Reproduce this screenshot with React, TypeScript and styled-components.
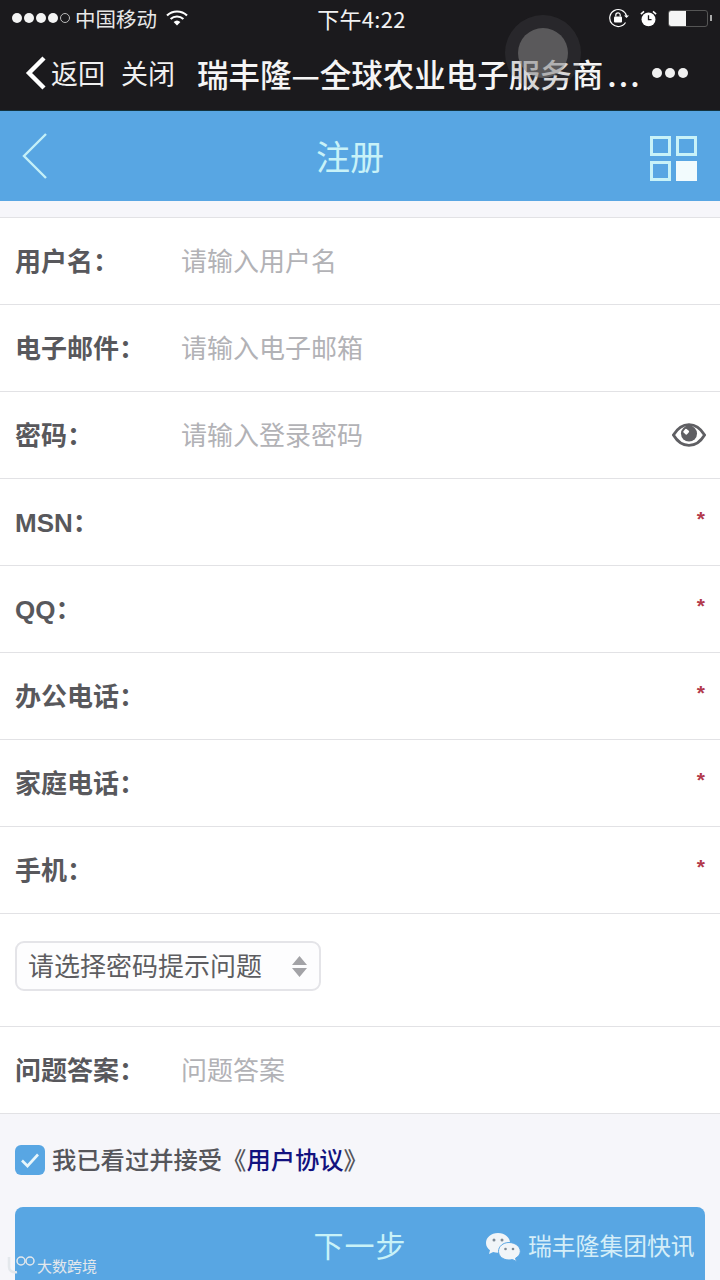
import React from "react";
import styled, { createGlobalStyle } from "styled-components";

const cjk = `"Noto Sans CJK SC", "Liberation Sans", sans-serif`;

const GlobalStyle = createGlobalStyle`
  html, body {
    margin: 0;
    padding: 0;
    background: #f6f6fa;
    font-family: ${cjk};
  }
`;

interface Field {
  label: string;
  placeholder?: string;
  required?: boolean;
  eye?: boolean;
}

const fields: Field[] = [
  { label: "用户名：", placeholder: "请输入用户名" },
  { label: "电子邮件：", placeholder: "请输入电子邮箱" },
  { label: "密码：", placeholder: "请输入登录密码", eye: true },
  { label: "MSN：", required: true },
  { label: "QQ：", required: true },
  { label: "办公电话：", required: true },
  { label: "家庭电话：", required: true },
  { label: "手机：", required: true },
];

function App() {
  return (
    <Page>
      <GlobalStyle />
      <Browser>
        <StatusBar>
          <StatusLeft>
            <Signal>
              <Dot />
              <Dot />
              <Dot />
              <Dot />
              <Dot $empty />
            </Signal>
            <Carrier>中国移动</Carrier>
            <svg width="22" height="16" viewBox="0 0 22 16">
              <path d="M1 5.500a14.500 14.500 0 0 1 20 0" fill="none" stroke="#fff" strokeWidth="2.200" />
              <path d="M4.600 9a9.500 9.500 0 0 1 12.800 0" fill="none" stroke="#fff" strokeWidth="2.200" />
              <path d="M7.600 12a5 5 0 0 1 6.800 0L11 15.600z" fill="#fff" />
            </svg>
          </StatusLeft>
          <Clock>下午4:22</Clock>
          <StatusRight>
            <svg width="21" height="20" viewBox="0 0 21 20">
              <path d="M17.500 14.500A8.500 8.500 0 1 1 18.500 8" fill="none" stroke="#fff" strokeWidth="1.200" />
              <path d="M16 7.500h5L18.500 10z" fill="#fff" />
              <rect x="6" y="8.500" width="8" height="6" rx="1" fill="#fff" />
              <path d="M7.800 8.500V7a2.200 2.200 0 0 1 4.400 0v1.500" fill="none" stroke="#fff" strokeWidth="1.200" />
            </svg>
            <svg width="17" height="19" viewBox="0 0 19 19">
              <circle cx="9.500" cy="10.500" r="7.800" fill="#fff" />
              <path d="M9.500 6v4.800h3.400" fill="none" stroke="#1b1a1d" strokeWidth="1.500" />
              <path d="M1 4.500 4.500 1.500M18 4.500l-3.500-3" stroke="#fff" strokeWidth="1.800" />
            </svg>
            <Battery>
              <BatteryFill />
            </Battery>
            <BatteryTip />
          </StatusRight>
        </StatusBar>
        <NavBar>
          <svg width="24" height="36" viewBox="0 0 24 36">
            <path d="M20 3 5 18l15 15" fill="none" stroke="#fff" strokeWidth="4.400" />
          </svg>
          <NavLink>返回</NavLink>
          <NavLink $close>关闭</NavLink>
          <PageName>
            瑞丰隆—全球农业电子服务商<Ellipsis>...</Ellipsis>
          </PageName>
          <MoreDots>
            <MoreDot />
            <MoreDot />
            <MoreDot />
          </MoreDots>
        </NavBar>
        <AssistiveTouch>
          <AssistiveCore />
        </AssistiveTouch>
      </Browser>

      <Header>
        <svg width="28" height="48" viewBox="0 0 28 48">
          <path d="M25 2 3 24l22 22" fill="none" stroke="#c4f0f8" strokeWidth="2.400" />
        </svg>
        <HeaderTitle>注册</HeaderTitle>
        <GridIcon>
          <GridCell />
          <GridCell />
          <GridCell />
          <GridCell $filled />
        </GridIcon>
      </Header>

      <Form>
        {fields.map((field) => (
          <Row key={field.label}>
            <Label>{field.label}</Label>
            {field.placeholder && <Placeholder>{field.placeholder}</Placeholder>}
            {field.eye && (
              <EyeIcon width="34" height="26" viewBox="0 0 36 26">
                <path
                  d="M1.500 13C6 5.500 11.500 2 18 2s12 3.500 16.500 11C30 20.500 24.500 24 18 24S6 20.500 1.500 13z"
                  fill="none"
                  stroke="#5f5f63"
                  strokeWidth="3"
                />
                <circle cx="18" cy="11.500" r="8.500" fill="#5f5f63" />
                <rect x="12.500" y="7" width="5" height="5" rx="1" fill="#fff" transform="rotate(40 15 9.500)" />
              </EyeIcon>
            )}
            {field.required && <Star>*</Star>}
          </Row>
        ))}
        <SelectRow>
          <SelectBox>
            <SelectText>请选择密码提示问题</SelectText>
            <svg width="15" height="21" viewBox="0 0 15 21">
              <path d="M7.500 0 15 9H0zM0 12h15l-7.500 9z" fill="#a3a3a7" />
            </svg>
          </SelectBox>
        </SelectRow>
        <Row>
          <Label>问题答案：</Label>
          <Placeholder>问题答案</Placeholder>
        </Row>
      </Form>

      <Footer>
        <Agreement>
          <CheckBox>
            <svg width="20" height="16" viewBox="0 0 20 16">
              <path d="M2 8.500 7.500 14 18 2.500" fill="none" stroke="#e8f6fb" strokeWidth="2.600" />
            </svg>
          </CheckBox>
          <AgreementText>
            我已看过并接受《<AgreementLink>用户协议</AgreementLink>》
          </AgreementText>
        </Agreement>
        <NextButton>下一步</NextButton>
      </Footer>

      <Watermark>
        <svg width="34" height="22" viewBox="0 0 34 22">
          <path d="M3 3v10c0 4 4 6 8 5" fill="none" stroke="#e4e8ec" strokeWidth="2.500" />
          <circle cx="15" cy="7" r="4" fill="none" stroke="#e4e8ec" strokeWidth="1.500" />
          <circle cx="24" cy="7" r="4" fill="none" stroke="#e4e8ec" strokeWidth="1.500" />
        </svg>
        <span>大数跨境</span>
      </Watermark>
      <OfficialAccount>
        <svg width="36" height="30" viewBox="0 0 36 30">
          <path d="M13 1C6 1 1 5.500 1 11c0 3 1.500 5.500 4 7.300L4 22l4.200-2c1.500.5 3 .7 4.800.7C20 20.700 25 16.500 25 11S20 1 13 1z" fill="#f1f5f8" />
          <path d="M24 10.500c-6 0-10.500 3.900-10.500 8.800S18 28 24 28c1.200 0 2.400-.2 3.500-.5L31.500 29.500l-1-3.300c3-1.600 4.800-4 4.800-6.900 0-4.900-5.300-8.800-11.300-8.800z" fill="#f1f5f8" stroke="#5aa7e4" strokeWidth="1" />
          <circle cx="9" cy="8" r="1.500" fill="#7d8a95" />
          <circle cx="17" cy="8" r="1.500" fill="#7d8a95" />
          <circle cx="20.500" cy="17" r="1.300" fill="#7d8a95" />
          <circle cx="28" cy="17" r="1.300" fill="#7d8a95" />
        </svg>
        <OfficialName>瑞丰隆集团快讯</OfficialName>
      </OfficialAccount>
    </Page>
  );
}

export default App;

const Page = styled.div`
  position: relative;
  width: 720px;
  height: 1280px;
  overflow: hidden;
  background: #f6f6fa;
`;

const Browser = styled.div`
  position: relative;
  height: 110px;
  background: #1b1a1d;
  border-bottom: 1px solid #12333f;
  color: #fff;
`;

const StatusBar = styled.div`
  display: grid;
  grid-template-columns: 1fr auto 1fr;
  align-items: center;
  height: 36px;
  padding: 0 12px;
`;

const StatusLeft = styled.div`
  display: flex;
  align-items: center;
  gap: 5px;
`;

const Signal = styled.div`
  display: flex;
  gap: 2px;
`;

const Dot = styled.span<{ $empty?: boolean }>`
  width: 10px;
  height: 10px;
  border-radius: 50%;
  box-sizing: border-box;
  background: ${({ $empty }) => ($empty ? "transparent" : "#f4f4f4")};
  border: ${({ $empty }) => ($empty ? "1px solid #bbb" : "none")};
`;

const Carrier = styled.span`
  font-size: 20.500px;
  line-height: 34px;
  margin-right: 4px;
  color: #e8e8e8;
`;

const Clock = styled.span`
  font-size: 22px;
  line-height: 34px;
  letter-spacing: 0.3px;
  margin-left: 3px;
  color: #f2f2f2;
`;

const StatusRight = styled.div`
  display: flex;
  align-items: center;
  justify-content: flex-end;
  gap: 11px;
  padding-right: 0;
`;

const Battery = styled.div`
  width: 40px;
  height: 17px;
  margin-right: -9px;
  border: 1px solid #555;
  border-radius: 3px;
  box-sizing: border-box;
`;

const BatteryFill = styled.div`
  width: 17px;
  height: 100%;
  background: #f5f5f5;
  border-radius: 2px 0 0 2px;
`;

const BatteryTip = styled.span`
  width: 2px;
  height: 6px;
  margin-right: -4px;
  background: #aaa;
`;

const NavBar = styled.div`
  display: flex;
  align-items: center;
  height: 74px;
  padding-left: 24px;
`;

const NavLink = styled.span<{ $close?: boolean }>`
  font-size: 27px;
  line-height: 72px;
  margin-left: ${({ $close }) => ($close ? "16px" : "3px")};
  color: #f0f0f0;
`;

const PageName = styled.span`
  font-size: 31.500px;
  line-height: 72px;
  margin-left: 22px;
  width: 447px;
  white-space: nowrap;
  font-weight: 500;
  color: #f5f5f5;
`;

const Ellipsis = styled.span`
  letter-spacing: 2px;
  margin-left: 4px;
`;

const MoreDots = styled.div`
  display: flex;
  gap: 3px;
  margin-left: 8px;
`;

const MoreDot = styled.span`
  width: 10px;
  height: 10px;
  border-radius: 50%;
  background: #f0f0f0;
`;

const AssistiveTouch = styled.div`
  position: absolute;
  left: 505px;
  top: 15px;
  width: 76px;
  height: 76px;
  border-radius: 50%;
  background: rgba(95, 95, 98, 0.2);
  display: flex;
  align-items: center;
  justify-content: center;
`;

const AssistiveCore = styled.div`
  width: 50px;
  height: 50px;
  border-radius: 50%;
  background: rgba(140, 140, 140, 0.5);
`;

const Header = styled.header`
  display: flex;
  align-items: center;
  justify-content: space-between;
  height: 90px;
  padding: 0 23px 0 21px;
  background: #58a6e3;
  box-sizing: border-box;
  position: relative;
`;

const HeaderTitle = styled.h1`
  position: absolute;
  left: 0;
  right: 0;
  margin: 0;
  text-align: center;
  font-size: 34px;
  font-weight: 400;
  line-height: 90px;
  color: #c8f2f8;
  pointer-events: none;
  padding-right: 20px;
`;

const GridIcon = styled.div`
  display: grid;
  grid-template-columns: 21px 21px;
  grid-auto-rows: 20px;
  gap: 5px;
  margin-top: 4px;
`;

const GridCell = styled.span<{ $filled?: boolean }>`
  box-sizing: border-box;
  border: 3px solid #c8f2f8;
  background: ${({ $filled }) => ($filled ? "#f2fbfd" : "transparent")};
  ${({ $filled }) => $filled && "border-color: #f2fbfd;"}
`;

const Form = styled.div`
  margin-top: 16px;
  background: #fff;
  border-top: 1px solid #e2e2e5;
`;

const Row = styled.div`
  display: flex;
  align-items: center;
  height: 86px;
  padding: 0 15px;
  border-bottom: 1px solid #e2e2e5;
`;

const Label = styled.label`
  width: 166px;
  flex: none;
  padding-bottom: 4px;
  font-family: "Liberation Sans", "Noto Sans CJK SC", sans-serif;
  font-size: 26px;
  font-weight: 700;
  color: #58585c;
  white-space: nowrap;
`;

const Placeholder = styled.span`
  padding-bottom: 4px;
  font-size: 26px;
  color: #b2b2b6;
`;

const EyeIcon = styled.svg`
  margin-left: auto;
  margin-right: -1px;
`;

const Star = styled.span`
  margin-left: auto;
  padding-bottom: 8px;
  font-family: "Liberation Sans", sans-serif;
  font-size: 21px;
  line-height: 21px;
  font-weight: 700;
  color: #b23a4c;
`;

const SelectRow = styled.div`
  height: 113px;
  padding: 27px 15px 0;
  background: #fff;
  border-bottom: 1px solid #e2e2e5;
  box-sizing: border-box;
`;

const SelectBox = styled.div`
  display: flex;
  align-items: center;
  justify-content: space-between;
  width: 306px;
  height: 50px;
  padding: 0 12px 0 11px;
  box-sizing: border-box;
  background: #fdfdfe;
  border: 2px solid #e4e4e8;
  border-radius: 9px;
`;

const SelectText = styled.span`
  padding-bottom: 4px;
  font-size: 26px;
  color: #5d5d61;
`;

const Footer = styled.div`
  padding: 27px 15px 0;
`;

const Agreement = styled.div`
  display: flex;
  align-items: center;
  gap: 7px;
  height: 38px;
`;

const CheckBox = styled.span`
  display: flex;
  align-items: center;
  justify-content: center;
  width: 30px;
  height: 30px;
  background: #58a6e3;
  border-radius: 6px;
`;

const AgreementText = styled.span`
  padding-bottom: 3px;
  font-size: 24.300px;
  font-weight: 500;
  color: #55555a;
`;

const AgreementLink = styled.span`
  color: #12127f;
`;

const NextButton = styled.button`
  display: block;
  width: 690px;
  height: 100px;
  margin-top: 28px;
  padding: 0 0 26px;
  border: 0;
  border-radius: 8px;
  background: #58a6e3;
  font-family: ${cjk};
  font-size: 30px;
  letter-spacing: 1px;
  color: #c8f2f8;
`;

const Watermark = styled.div`
  position: absolute;
  left: 6px;
  bottom: 4px;
  display: flex;
  align-items: center;
  font-size: 15px;
  color: #e4e8ec;

  & span {
    margin-left: -3px;
  }
`;

const OfficialAccount = styled.div`
  position: absolute;
  left: 485px;
  top: 1227px;
  display: flex;
  align-items: center;
  gap: 7px;
  white-space: nowrap;
  color: #d5eef8;
`;

const OfficialName = styled.span`
  padding-bottom: 4px;
  font-size: 23.800px;
`;
